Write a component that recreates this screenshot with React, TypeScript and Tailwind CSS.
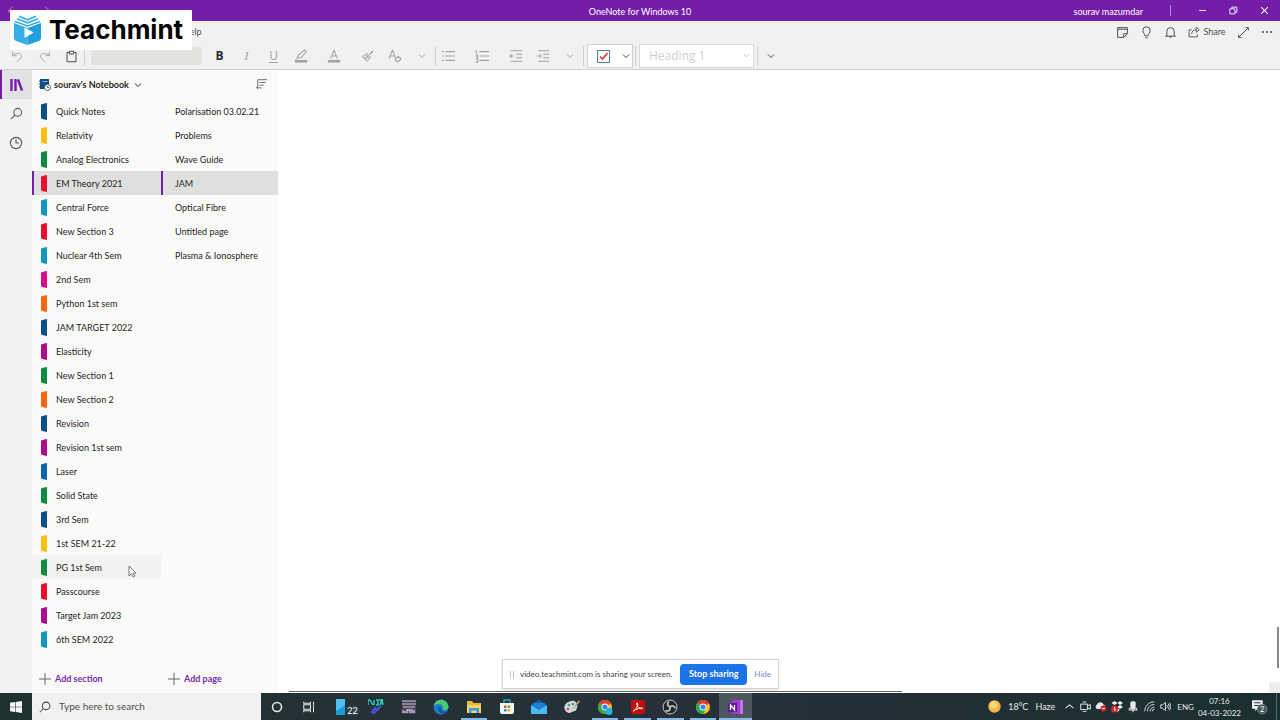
import React from 'react';
import { clsx } from 'clsx';

const sections = [
  { name: 'Quick Notes', color: '#0b4f8a' },
  { name: 'Relativity', color: '#fdc010' },
  { name: 'Analog Electronics', color: '#0f8a45' },
  { name: 'EM Theory 2021', color: '#e8112d', active: true },
  { name: 'Central Force', color: '#0c98bf' },
  { name: 'New Section 3', color: '#e8112d' },
  { name: 'Nuclear 4th Sem', color: '#0c98bf' },
  { name: '2nd Sem', color: '#dc0a84' },
  { name: 'Python 1st sem', color: '#f7680f' },
  { name: 'JAM TARGET 2022', color: '#0b4f8a' },
  { name: 'Elasticity', color: '#b0098f' },
  { name: 'New Section 1', color: '#0f8a45' },
  { name: 'New Section 2', color: '#f7680f' },
  { name: 'Revision', color: '#0b4f8a' },
  { name: 'Revision 1st sem', color: '#b0098f' },
  { name: 'Laser', color: '#0a66b0' },
  { name: 'Solid State', color: '#0f8a45' },
  { name: '3rd Sem', color: '#0b4f8a' },
  { name: '1st SEM 21-22', color: '#fdc010' },
  { name: 'PG 1st Sem', color: '#0f8a45', hover: true },
  { name: 'Passcourse', color: '#e8112d' },
  { name: 'Target Jam 2023', color: '#b0098f' },
  { name: '6th SEM 2022', color: '#0c98bf' },
];

const pages = [
  'Polarisation 03.02.21',
  'Problems',
  'Wave Guide',
  'JAM',
  'Optical Fibre',
  'Untitled page',
  'Plasma & Ionosphere',
];

// Stroke icon on a 16px grid
const Icon = ({ size = 14, className = '', children }: any) => (
  <svg
    width={size}
    height={size}
    viewBox="0 0 16 16"
    fill="none"
    stroke="currentColor"
    strokeWidth={1}
    className={clsx('shrink-0', className)}
    aria-hidden="true"
  >
    {children}
  </svg>
);

const Chevron = ({ size = 8, className = '' }: any) => (
  <Icon size={size} className={className}>
    <path d="M2 5l6 6 6-6" strokeWidth={2} />
  </Icon>
);

const Tool = ({ label, className = '', children }: any) => (
  <button aria-label={label} className={clsx('flex h-6 w-[27px] shrink-0 items-center justify-center', className)}>
    {children}
  </button>
);

const Divider = ({ className = '' }: any) => (
  <span className={clsx('h-5 w-px shrink-0 bg-[#cfcfcf]', className)} />
);

const Logo = () => (
  <div className="absolute left-[10px] top-[10px] z-10 flex h-10 w-[182px] items-center gap-[7px] bg-white pl-[3px]">
    <svg width="29" height="30" viewBox="0 0 29 30" aria-hidden="true">
      <path d="M1 8l13.500 5v17L3 26q-2-1-2-3z" fill="#35aee6" />
      <path d="M28 8l-13.500 5v17L26 26q2-1 2-3z" fill="#239fdb" />
      <path d="M2 6.500l12.500 4.500L27 6.500M4 3.800l10.500 4L25 3.800M6 1.300l8.500 3.500L23 1.300" fill="none" stroke="#35aee6" strokeWidth="1.600" />
      <path d="M11.500 12.500l9 5-9 5.500z" fill="#fff" />
    </svg>
    <span className="font-['Inter'] text-[26px] font-bold leading-8 text-black">Teachmint</span>
  </div>
);

const TitleBar = () => (
  <header className="relative flex h-[21px] items-center bg-[#731daa] text-white">
    <div className="flex items-center gap-5 pl-[7px] text-[#c9a5e0]">
      <button aria-label="Back"><Icon size={12}><path d="M8 2L2 8l6 6M2 8h13" /></Icon></button>
      <button aria-label="Forward"><Icon size={12}><path d="M8 2l6 6-6 6M14 8H1" /></Icon></button>
    </div>
    <h1 className="absolute left-1/2 top-1 -translate-x-1/2 text-[9px] leading-4">OneNote for Windows 10</h1>
    <div className="ml-auto flex items-center">
      <span className="pt-[2px] text-[9px] leading-4">sourav mazumdar</span>
      <span className="ml-[27px] h-[11px] w-px bg-[#b98ad8]" />
      <button aria-label="Minimize" className="ml-4 flex w-[31px] justify-center">
        <Icon size={9}><path d="M2 8h12" strokeWidth={1.6} /></Icon>
      </button>
      <button aria-label="Restore" className="flex w-[31px] justify-center">
        <Icon size={9}><path d="M1.500 5h9v9h-9zM5 5V2h9v9h-3" strokeWidth={1.600} /></Icon>
      </button>
      <button aria-label="Close" className="flex w-[31px] justify-center">
        <Icon size={9}><path d="M2 2l12 12M14 2L2 14" strokeWidth={1.800} /></Icon>
      </button>
    </div>
  </header>
);

const MenuRow = () => (
  <div className="flex h-[22px] items-center text-[#4f4f4f]">
    <button className="ml-[183px] text-[9px] leading-4">Help</button>
    <div className="ml-auto flex items-center pr-px">
      <button aria-label="Feed" className="flex w-6 justify-center">
        <Icon size={13}><path d="M2 2h12v7.500L9.500 14H2zM14 9.500H9.500V14M2 4h12" strokeWidth={1.200} /></Icon>
      </button>
      <button aria-label="Tell me" className="flex w-6 justify-center">
        <Icon size={13}><path d="M6 12c0-2.500-2.500-3.500-2.500-6.500a4.500 4.500 0 0 1 9 0c0 3-2.500 4-2.500 6.500zM6.500 14.500h3" strokeWidth={1.200} /></Icon>
      </button>
      <button aria-label="Notifications" className="flex w-6 justify-center">
        <Icon size={13}><path d="M1.500 12.500h13M3.500 12.500V6.500a4.500 4.500 0 0 1 9 0v6M6.500 12.500a1.500 1.500 0 0 0 3 0" strokeWidth={1.200} /></Icon>
      </button>
      <button className="ml-1 flex w-[42px] items-center justify-center gap-[3px] text-[9px] leading-4">
        <Icon size={12}><path d="M5 5H1.500v9.500h11V11M5 11c0-4 2-6 6-6M11 1.500V8.500L15 5z" strokeWidth={1.200} /></Icon>
        Share
      </button>
      <button aria-label="Full screen" className="ml-[3px] flex w-6 justify-center">
        <Icon size={13}><path d="M2 14L14 2M2 10.500V14h3.500M10.500 2H14v3.500" strokeWidth={1.200} /></Icon>
      </button>
      <button aria-label="More" className="flex w-6 justify-center">
        <Icon size={12}>
          <g fill="currentColor" stroke="none"><circle cx="2.500" cy="8" r="1.400" /><circle cx="8" cy="8" r="1.400" /><circle cx="13.500" cy="8" r="1.400" /></g>
        </Icon>
      </button>
    </div>
  </div>
);

const Toolbar = () => (
  <div className="flex h-[26px] items-center text-[#a3a3a3]">
    <Tool label="Undo" className="ml-1"><Icon size={13}><path d="M2 2v5h5M2 7c3-4 11-4 11 1 0 3-3 3-6 7" strokeWidth={1.200} /></Icon></Tool>
    <Tool label="Redo"><Icon size={13}><path d="M14 2v5H9M14 7C11 3 3 3 3 8c0 3 3 3 6 7" strokeWidth={1.200} /></Icon></Tool>
    <Tool label="Paste" className="text-[#4a4a4a]"><Icon size={13}><path d="M5 3H2.500v11.500h11V3H11M5.500 1.500h5v3.500h-5z" strokeWidth={1.200} /></Icon></Tool>
    <Divider className="-ml-px" />
    <input disabled aria-label="Font" className="ml-[6px] h-[18px] w-[111px] rounded-sm bg-[#e2e2df]" />
    <Tool label="Bold" className="ml-1 font-['Open_Sans'] text-xs font-bold text-[#2b2b2b]">B</Tool>
    <Tool label="Italic" className="font-['Liberation_Serif'] text-xs italic">I</Tool>
    <Tool label="Underline" className="font-['Open_Sans'] text-xs underline underline-offset-2">U</Tool>
    <Tool label="Highlight">
      <Icon size={14}><path d="M4 10l1-3 7-6 2 2-6 7zM4 10l4 0M4 10l-2 2" strokeWidth={1.200} /><path d="M1 14h14" strokeWidth={3} /></Icon>
    </Tool>
    <Tool label="Font color" className="ml-[6px]">
      <Icon size={14}><path d="M4 11L8 1.500 12 11M5.500 8h5" strokeWidth={1.200} /><path d="M1 14h14" strokeWidth={3} /></Icon>
    </Tool>
    <Tool label="Format painter" className="ml-[7px]">
      <Icon size={13}>
        <path d="M15 1l-4.500 4.500" strokeWidth={1.600} />
        <path d="M7 4l5 5-1.500 1.500-5-5z" fill="currentColor" fillOpacity=".4" strokeWidth={1.200} />
        <path d="M5.500 5.500L1.500 8l6 6 3-3.500M4 9.500l3 1M6 8l3 1.500M3 8.500l4 4" strokeWidth={1.200} />
      </Icon>
    </Tool>
    <Tool label="Clear formatting">
      <Icon size={14}><path d="M1 11L5 1.500 9 11M2.500 8h5M8 12l3.500-3.500L15 11l-3 3.500H10z" strokeWidth={1.200} /></Icon>
    </Tool>
    <Tool label="More font options"><Chevron /></Tool>
    <Divider />
    <Tool label="Bulleted list" className="-ml-[2px]">
      <Icon size={14}><path d="M5 3h11M5 8h11M5 13h11M1 3h2M1 8h2M1 13h2" strokeWidth={1.200} /></Icon>
    </Tool>
    <Tool label="Numbered list" className="ml-[7px]">
      <Icon size={14}><path d="M5 3h11M5 8h11M5 13h11M1.500 1v4M1 7h2v2H1M1 11h2v4H1" strokeWidth={1.200} /></Icon>
    </Tool>
    <Tool label="Decrease indent" className="ml-[7px]">
      <Icon size={14}><path d="M2 2h13M8 6h7M8 10h7M2 14h13M6 8H1M3 6L1 8l2 2" strokeWidth={1.200} /></Icon>
    </Tool>
    <Tool label="Increase indent">
      <Icon size={14}><path d="M2 2h13M8 6h7M8 10h7M2 14h13M1 8h5M4 6l2 2-2 2" strokeWidth={1.200} /></Icon>
    </Tool>
    <Tool label="Paragraph options"><Chevron /></Tool>
    <Divider />
    <div className="ml-[3px] flex h-6 w-[46px] shrink-0 items-center justify-between border border-[#d2d2d2] bg-white pl-[9px] pr-[2px]">
      <button aria-label="To do tag">
        <svg width="13" height="13" viewBox="0 0 13 13" fill="none" className="block" aria-hidden="true">
          <path d="M.5.5h12v12H.5z" stroke="#4d8299" />
          <path d="M3 6.500l2.500 2.500 5-6" stroke="#dc3340" strokeWidth="1.600" />
        </svg>
      </button>
      <button aria-label="Choose tag" className="text-[#4a4a4a]"><Chevron /></button>
    </div>
    <Divider className="ml-[2px]" />
    <div className="relative ml-[3px] h-6 w-[115px] shrink-0">
      <select aria-label="Style" className="block h-full w-full appearance-none border border-[#d8d8d8] bg-white pl-[9px] font-['Open_Sans'] text-xs text-[#cfcfcf]">
        <option>Heading 1</option>
      </select>
      <Chevron size={7} className="pointer-events-none absolute right-1 top-2 text-[#bdbdbd]" />
    </div>
    <Divider className="ml-[3px]" />
    <Tool label="More commands" className="-ml-px text-[#4a4a4a]"><Chevron /></Tool>
  </div>
);

const Rail = () => (
  <nav className="flex w-8 shrink-0 flex-col bg-[#f2f1f3] text-[#5c5c5c]">
    <button aria-label="Notebooks" className="flex h-[29px] items-center justify-center border-l-2 border-[#731daa] bg-[#e3e2e3] pr-[2px] text-[#731daa]">
      <svg width="13" height="12" viewBox="0 0 13 12" aria-hidden="true">
        <path d="M1.500 0v12M5.500 0v12M8 .5l4 11" stroke="currentColor" strokeWidth="2.400" fill="none" />
      </svg>
    </button>
    <button aria-label="Search" className="flex h-[29px] items-center justify-center">
      <Icon size={13}><circle cx="9.500" cy="6.500" r="4.800" strokeWidth={1.300} /><path d="M6 10l-5 5" strokeWidth={1.300} /></Icon>
    </button>
    <button aria-label="Recent notes" className="flex h-[29px] items-center justify-center">
      <Icon size={14}><circle cx="8" cy="8" r="6.500" strokeWidth={1.300} /><path d="M8 4v4h3.500" strokeWidth={1.300} /></Icon>
    </button>
  </nav>
);

const AddButton = ({ children, className }: any) => (
  <button className={clsx('flex h-7 items-center gap-1 text-[9px] font-bold text-[#7a2bb0]', className)}>
    <Icon size={12} className="text-[#5f5265]"><path d="M8 0v16M0 8h16" strokeWidth={1.200} /></Icon>
    {children}
  </button>
);

const NotebookPanel = () => (
  <aside className="flex w-[246px] shrink-0 flex-col bg-[#fafaf9] text-[9px] text-[#262626]">
    <div className="flex h-[29px] items-center pl-[7px] pr-[11px]">
      <button className="flex items-center gap-[3px] font-bold">
        <svg width="12" height="13" viewBox="0 0 12 13" aria-hidden="true">
          <path d="M1 1h9v10H1z" fill="#0b4f8a" />
          <path d="M0 3h2M0 6h2M0 9h2" stroke="#0b4f8a" />
          <path d="M3.500 3.500h5" stroke="#8fb2d2" />
          <circle cx="8.500" cy="9.500" r="3" fill="#fafaf9" stroke="#53616e" />
          <path d="M8.500 8v1.500H10" stroke="#53616e" fill="none" />
        </svg>
        sourav's Notebook
        <Chevron className="ml-[2px]" />
      </button>
      <button aria-label="Sort pages" className="ml-auto text-[#666]">
        <Icon size={11}><path d="M3 1h13M5 5h9M5 9h6M5 13h3M2.500 1v13M0 11.500L2.500 14 5 11.500" strokeWidth={1.400} /></Icon>
      </button>
    </div>
    <div className="flex flex-1">
      <ul className="w-[129px]">
        {sections.map(section => (
          <li key={section.name}>
            <button
              className={clsx(
                'flex h-6 w-full items-center gap-[9px] border-l-2 pl-[7px] pt-px text-left',
                section.active ? 'border-[#731daa] bg-[#dfdfde]' : 'border-transparent',
                section.hover && 'bg-[#f2f2f1]'
              )}
            >
              <svg width="6" height="17" viewBox="0 0 6 17" aria-hidden="true">
                <path d="M0 2Q0 1 6 0v17Q0 16 0 15z" fill={section.color} />
              </svg>
              {section.name}
            </button>
          </li>
        ))}
      </ul>
      <ul className="flex-1">
        {pages.map(page => (
          <li key={page}>
            <button
              className={clsx(
                'flex h-6 w-full items-center border-l-2 pl-3 pt-px text-left',
                page === 'JAM' ? 'border-[#731daa] bg-[#dfdfde]' : 'border-transparent'
              )}
            >
              {page}
            </button>
          </li>
        ))}
      </ul>
    </div>
    <div className="flex pl-[7px]">
      <AddButton className="w-[129px]">Add section</AddButton>
      <AddButton>Add page</AddButton>
    </div>
  </aside>
);

const ShareBar = () => (
  <div className="absolute bottom-[4px] left-[224px] flex h-[30px] w-[277px] items-center border border-[#d4d4d4] bg-white text-[8px] shadow-sm">
    <span className="ml-[7px] h-[7px] w-1 border-x border-[#c2c2c2]" />
    <span className="ml-[6px] whitespace-nowrap text-[#444]">video.teachmint.com is sharing your screen.</span>
    <button className="ml-auto h-[21px] w-[67px] rounded-sm bg-[#1a73e8] text-[9px] font-bold text-white">Stop sharing</button>
    <button className="mx-[7px] text-[#6c8ddc]">Hide</button>
  </div>
);

const Chrome = () => (
  <>
    <circle cx="8" cy="8" r="7" fill="#fbc116" />
    <path d="M8 8L1.900 4.500A7 7 0 0 1 14.100 4.500z" fill="#e33b2e" />
    <path d="M8 8L1.900 4.500A7 7 0 0 0 8 15l3-5z" fill="#2da94f" />
    <circle cx="8" cy="8" r="3.500" fill="#fff" />
    <circle cx="8" cy="8" r="2.600" fill="#3f83ea" />
  </>
);

const apps = [
  {
    name: 'Your Phone',
    icon: (
      <>
        <path d="M1 0h9v16H1z" fill="#1e9bd7" />
        <path d="M1 0h9v6L1 12z" fill="#4cc0ee" />
      </>
    ),
    badge: '22',
  },
  {
    name: 'Oscilloscope',
    icon: (
      <>
        <path d="M0 1v5M2 1l3 5M6 1v5M8 1h2v5H8M12 6l2-5 1 5M0 1h2M11 1h4" stroke="#1fd6c4" strokeWidth="1.400" fill="none" />
        <path d="M3 14l4-5 2 2 4-4M5 15l3-3" stroke="#5650d8" strokeWidth="2" fill="none" />
      </>
    ),
  },
  {
    name: 'Simulator',
    icon: (
      <>
        <path d="M1 1h14v14H1z" fill="#4b4560" />
        <path d="M1 2h14M1 5h14M2 8h12" stroke="#c3bfd0" fill="none" />
        <path d="M2 14v-3M4 14v-2M6 14v-3h3v3M11 14v-4M13 14v-3" stroke="#c3bfd0" strokeWidth="1.400" fill="none" />
      </>
    ),
  },
  {
    name: 'Edge',
    icon: (
      <>
        <circle cx="8" cy="8" r="7.500" fill="#1b7fd0" />
        <path d="M.6 7A7.500 7.500 0 0 1 15.500 8c0 2-2 3.500-5 3-1.500-.5-.5-1.500-.5-3C10 5.500 5 3.500.6 7z" fill="#4cc86f" />
        <path d="M5.500 8c-1 3 1 6.500 5 6.500l3.500-2c-4 1-7-1-6-4.500z" fill="#124f9c" />
      </>
    ),
  },
  {
    name: 'File Explorer',
    icon: (
      <>
        <path d="M1 2h5l1.500 2H15v10H1z" fill="#f2b632" />
        <path d="M1 6h14v8H1z" fill="#fbd56b" />
        <path d="M3 14V9h10v5h-2.500v-2.500h-5V14z" fill="#3b9be0" />
      </>
    ),
    running: true,
  },
  {
    name: 'Microsoft Store',
    icon: (
      <>
        <path d="M5 4V1h6v3" stroke="#2da5bd" strokeWidth="1.400" fill="none" />
        <path d="M1 4h14v9q0 2-2 2H3q-2 0-2-2z" fill="#f4f6f6" />
        <path d="M5 6.500h2.500V9H5z" fill="#e5532d" />
        <path d="M8.500 6.500H11V9H8.500z" fill="#6fae2c" />
        <path d="M5 10h2.500v2.500H5z" fill="#2b8fd8" />
        <path d="M8.500 10H11v2.500H8.500z" fill="#f0b51f" />
      </>
    ),
  },
  {
    name: 'Mail',
    icon: (
      <>
        <path d="M0 6l8-5 8 5v9H0z" fill="#1266b8" />
        <path d="M2 4h12v6H2z" fill="#1b7fd0" />
        <path d="M0 6l8 5 8-5v9H0z" fill="#4cb8f0" />
      </>
    ),
  },
  {
    name: 'Paint',
    icon: (
      <>
        <path d="M7 2c5-1 7 3 6 7s-4 3-5 4-5 2-7-2 1-8 6-9z" fill="#d0d8da" />
        <circle cx="5" cy="6" r="1.300" fill="#3f92cf" />
        <circle cx="9" cy="5" r="1.300" fill="#57a64a" />
        <circle cx="4" cy="10" r="1.300" fill="#d8543f" />
        <path d="M8 11l6-9 2-1-1 3z" fill="#b99c68" />
      </>
    ),
  },
  {
    name: 'Chrome (Teachmint)',
    icon: (
      <>
        <Chrome />
        <circle cx="12" cy="12.500" r="3.500" fill="#22b5dd" />
      </>
    ),
    running: true,
  },
  {
    name: 'Acrobat Reader',
    icon: (
      <>
        <rect x="1" y="1" width="14" height="14" rx="2" fill="#c40d0a" />
        <path d="M3.500 12c2-1 5-5 4-8-1-1-1.500 1 0 3s4 3.500 5 2.500-4-1-9 2.500z" stroke="#fff" fill="none" />
      </>
    ),
    running: true,
  },
  {
    name: 'OBS Studio',
    icon: (
      <>
        <circle cx="8" cy="8" r="7" fill="#222528" stroke="#c4c9cc" />
        <path d="M8 8c-3-1-3-4-1-5.500M8 8c2-2 5-1 5 1.500M8 8c1 3-2 5-4.500 3.500" stroke="#b7bdc0" strokeWidth="1.800" fill="none" />
      </>
    ),
    running: true,
  },
  { name: 'Chrome', icon: <Chrome />, running: true },
  {
    name: 'OneNote',
    icon: (
      <>
        <path d="M4 1h9v14H4z" fill="#a33bd0" />
        <path d="M12 1h3v14h-3z" fill="#c970e8" />
        <path d="M0 4h9v9H0z" fill="#651a97" />
        <path d="M2.500 11V6l4 5V6" stroke="#fff" strokeWidth="1.300" fill="none" />
      </>
    ),
    running: true,
    active: true,
  },
];

const Taskbar = () => (
  <footer className="flex h-[27px] shrink-0 bg-linear-to-r from-[#20322f] via-[#27303a] to-[#1b2f30] text-[#e6eaea]">
    <button aria-label="Start" className="flex w-8 items-center justify-center">
      <svg width="12" height="12" viewBox="0 0 12 12" fill="#f5f7f7" aria-hidden="true">
        <path d="M0 1.700l5-.7v4.700H0zM5.600.9L12 0v5.700H5.600zM0 6.300h5V11l-5-.7zM5.600 6.300H12V12l-6.400-.9z" />
      </svg>
    </button>
    <label className="flex w-[229px] items-center gap-2 bg-[#f1f1f1] pl-[7px] text-[#4a4a4a]">
      <Icon size={12}><circle cx="9.500" cy="6.500" r="5" strokeWidth={1.400} /><path d="M6 10l-5 5" strokeWidth={1.400} /></Icon>
      <input aria-label="Search Windows" placeholder="Type here to search" className="w-full bg-transparent text-[10px] outline-none placeholder:text-[#4f4f4f]" />
    </label>
    <button aria-label="Cortana" className="flex w-8 items-center justify-center">
      <Icon size={12}><circle cx="8" cy="8" r="6" strokeWidth={2} /></Icon>
    </button>
    <button aria-label="Task view" className="flex w-8 items-center justify-center">
      <Icon size={12}><path d="M1 1v2h9V1M1 5h9v6H1zM1 15v-2h9v2M14 1v4M14 8v7M13 6.500h2" strokeWidth={1.400} /></Icon>
    </button>
    <div className="ml-[2px] flex w-[425px]">
      {apps.map(app => (
        <button
          key={app.name}
          aria-label={app.name}
          className={clsx('relative flex flex-1 items-center justify-center', app.active && 'bg-[#4d5760]')}
        >
          <svg width="16" height="16" viewBox="0 0 16 16" aria-hidden="true">{app.icon}</svg>
          {app.badge && (
            <span className="absolute bottom-[3px] right-0 flex h-3 items-center rounded-full bg-[#2b3c40] px-[2px] text-[9px] text-white">{app.badge}</span>
          )}
          {app.running && (
            <span className={clsx('absolute bottom-0 h-[2px] bg-[#86b8e2]', app.active ? 'inset-x-0' : 'inset-x-[3px]')} />
          )}
        </button>
      ))}
    </div>
    <div className="ml-auto flex items-center text-[9px]">
      <button className="flex items-center gap-[7px]">
        <svg width="13" height="13" viewBox="0 0 13 13" aria-hidden="true">
          <circle cx="6.500" cy="6.500" r="6.200" fill="#f2b840" />
          <circle cx="5.500" cy="5" r="3.800" fill="#fad67c" />
        </svg>
        <span>18°C</span>
        <span>Haze</span>
      </button>
      <button aria-label="Show hidden icons" className="ml-[6px] flex w-4 justify-center">
        <Icon size={9}><path d="M1 11l7-6 7 6" strokeWidth={1.800} /></Icon>
      </button>
      <button aria-label="Meet now" className="flex w-4 justify-center">
        <Icon size={11}><path d="M1 4.500h10v8H1zM11 7l4-2v7l-4-2M4 1.500h5M4 15.500h5" strokeWidth={1.400} /></Icon>
      </button>
      <button aria-label="OneDrive" className="flex w-4 justify-center">
        <svg width="12" height="11" viewBox="0 0 12 11" aria-hidden="true">
          <path d="M2 8a2.500 2.500 0 0 1 0-4.500 3.500 3.500 0 0 1 6.500 0A2.500 2.500 0 0 1 9 8z" fill="#e4e8e8" />
          <circle cx="8.500" cy="7.500" r="3" fill="#db1f2d" />
          <path d="M7 7.500h3" stroke="#fff" />
        </svg>
      </button>
      <button aria-label="Dropbox" className="flex w-4 justify-center">
        <svg width="12" height="12" viewBox="0 0 12 12" aria-hidden="true">
          <path d="M3.500 0L6.500 2l-3 2-3-2zM9 0l3 2-3 2-2.500-2zM9 4l3 2-3 2-2.500-2zM6.300 7l2.500 2-2.500 2-2-2z" fill="#f0f2f2" />
          <circle cx="3.500" cy="8" r="3.500" fill="#db1f2d" />
          <path d="M2.800 6.800l1-.8v4" stroke="#fff" fill="none" />
        </svg>
      </button>
      <button aria-label="Microphone" className="flex w-4 justify-center">
        <Icon size={12}><rect x="5" y="1" width="6" height="10" rx="1" fill="currentColor" /><path d="M3 9v3h10V9M8 12v3" strokeWidth={1.400} /></Icon>
      </button>
      <button aria-label="Network" className="flex w-4 justify-center">
        <Icon size={11}><path d="M1 15A14 14 0 0 1 15 1M5 15A10 10 0 0 1 15 5M9 15a6 6 0 0 1 6-6M12 15a3 3 0 0 1 3-3" strokeWidth={1.300} /></Icon>
      </button>
      <button aria-label="Volume" className="flex w-4 justify-center">
        <Icon size={11}><path d="M1 5.500h3L8 2v12l-4-3.500H1zM10 6q1.500 2 0 4M12 4q3 4 0 8M14 2.500q4 5.500 0 11" strokeWidth={1.300} /></Icon>
      </button>
      <button className="ml-1 text-[8px]">ENG</button>
      <button className="ml-1 text-center text-[8px] leading-3">
        07:16<br />04-03-2022
      </button>
      <button aria-label="Action center" className="ml-[10px] mr-2">
        <svg width="17" height="17" viewBox="0 0 16 16" className="block" aria-hidden="true">
          <path d="M1 2h10v8H6l-2 2.500V10H1z" fill="#f0f3f3" />
          <path d="M3 4.500h6M3 7h6" stroke="#223436" />
          <circle cx="10.500" cy="10.500" r="4.500" fill="#43565a" stroke="#8c9799" strokeWidth=".7" />
          <text x="10.500" y="13" fontSize="7" textAnchor="middle" fill="#fff">2</text>
        </svg>
      </button>
      <span className="mr-[3px] h-[27px] w-px bg-[#5b696b]" />
    </div>
  </footer>
);

export default function App() {
  return (
    <div className="relative flex min-h-screen flex-col overflow-hidden bg-white font-['Lato','Open_Sans',sans-serif]">
      <Logo />
      <TitleBar />
      <div className="border-b border-[#d3d2d3] bg-[#f2f1f2]">
        <MenuRow />
        <Toolbar />
      </div>
      <main className="flex flex-1">
        <Rail />
        <NotebookPanel />
        <section className="relative flex-1 bg-white" aria-label="Page">
          <ShareBar />
          <div className="absolute bottom-px left-[11px] h-px w-[613px] bg-[#5e6664]" />
          <div className="absolute bottom-[25px] right-px h-[41px] w-[2px] bg-[#8b8b8b]" />
          <div className="absolute bottom-0 right-0 h-[11px] w-[11px] bg-[#ededed]" />
        </section>
      </main>
      <Taskbar />

      {/* Mouse pointer */}
      <svg width="9" height="13" viewBox="0 0 9 13" className="absolute left-[128px] top-[565px]" aria-hidden="true">
        <path d="M1 1v10l2.500-2.200L5.200 12l1.500-.8-1.500-3H8z" fill="#fff" stroke="#555" strokeWidth=".8" />
      </svg>
    </div>
  );
}
